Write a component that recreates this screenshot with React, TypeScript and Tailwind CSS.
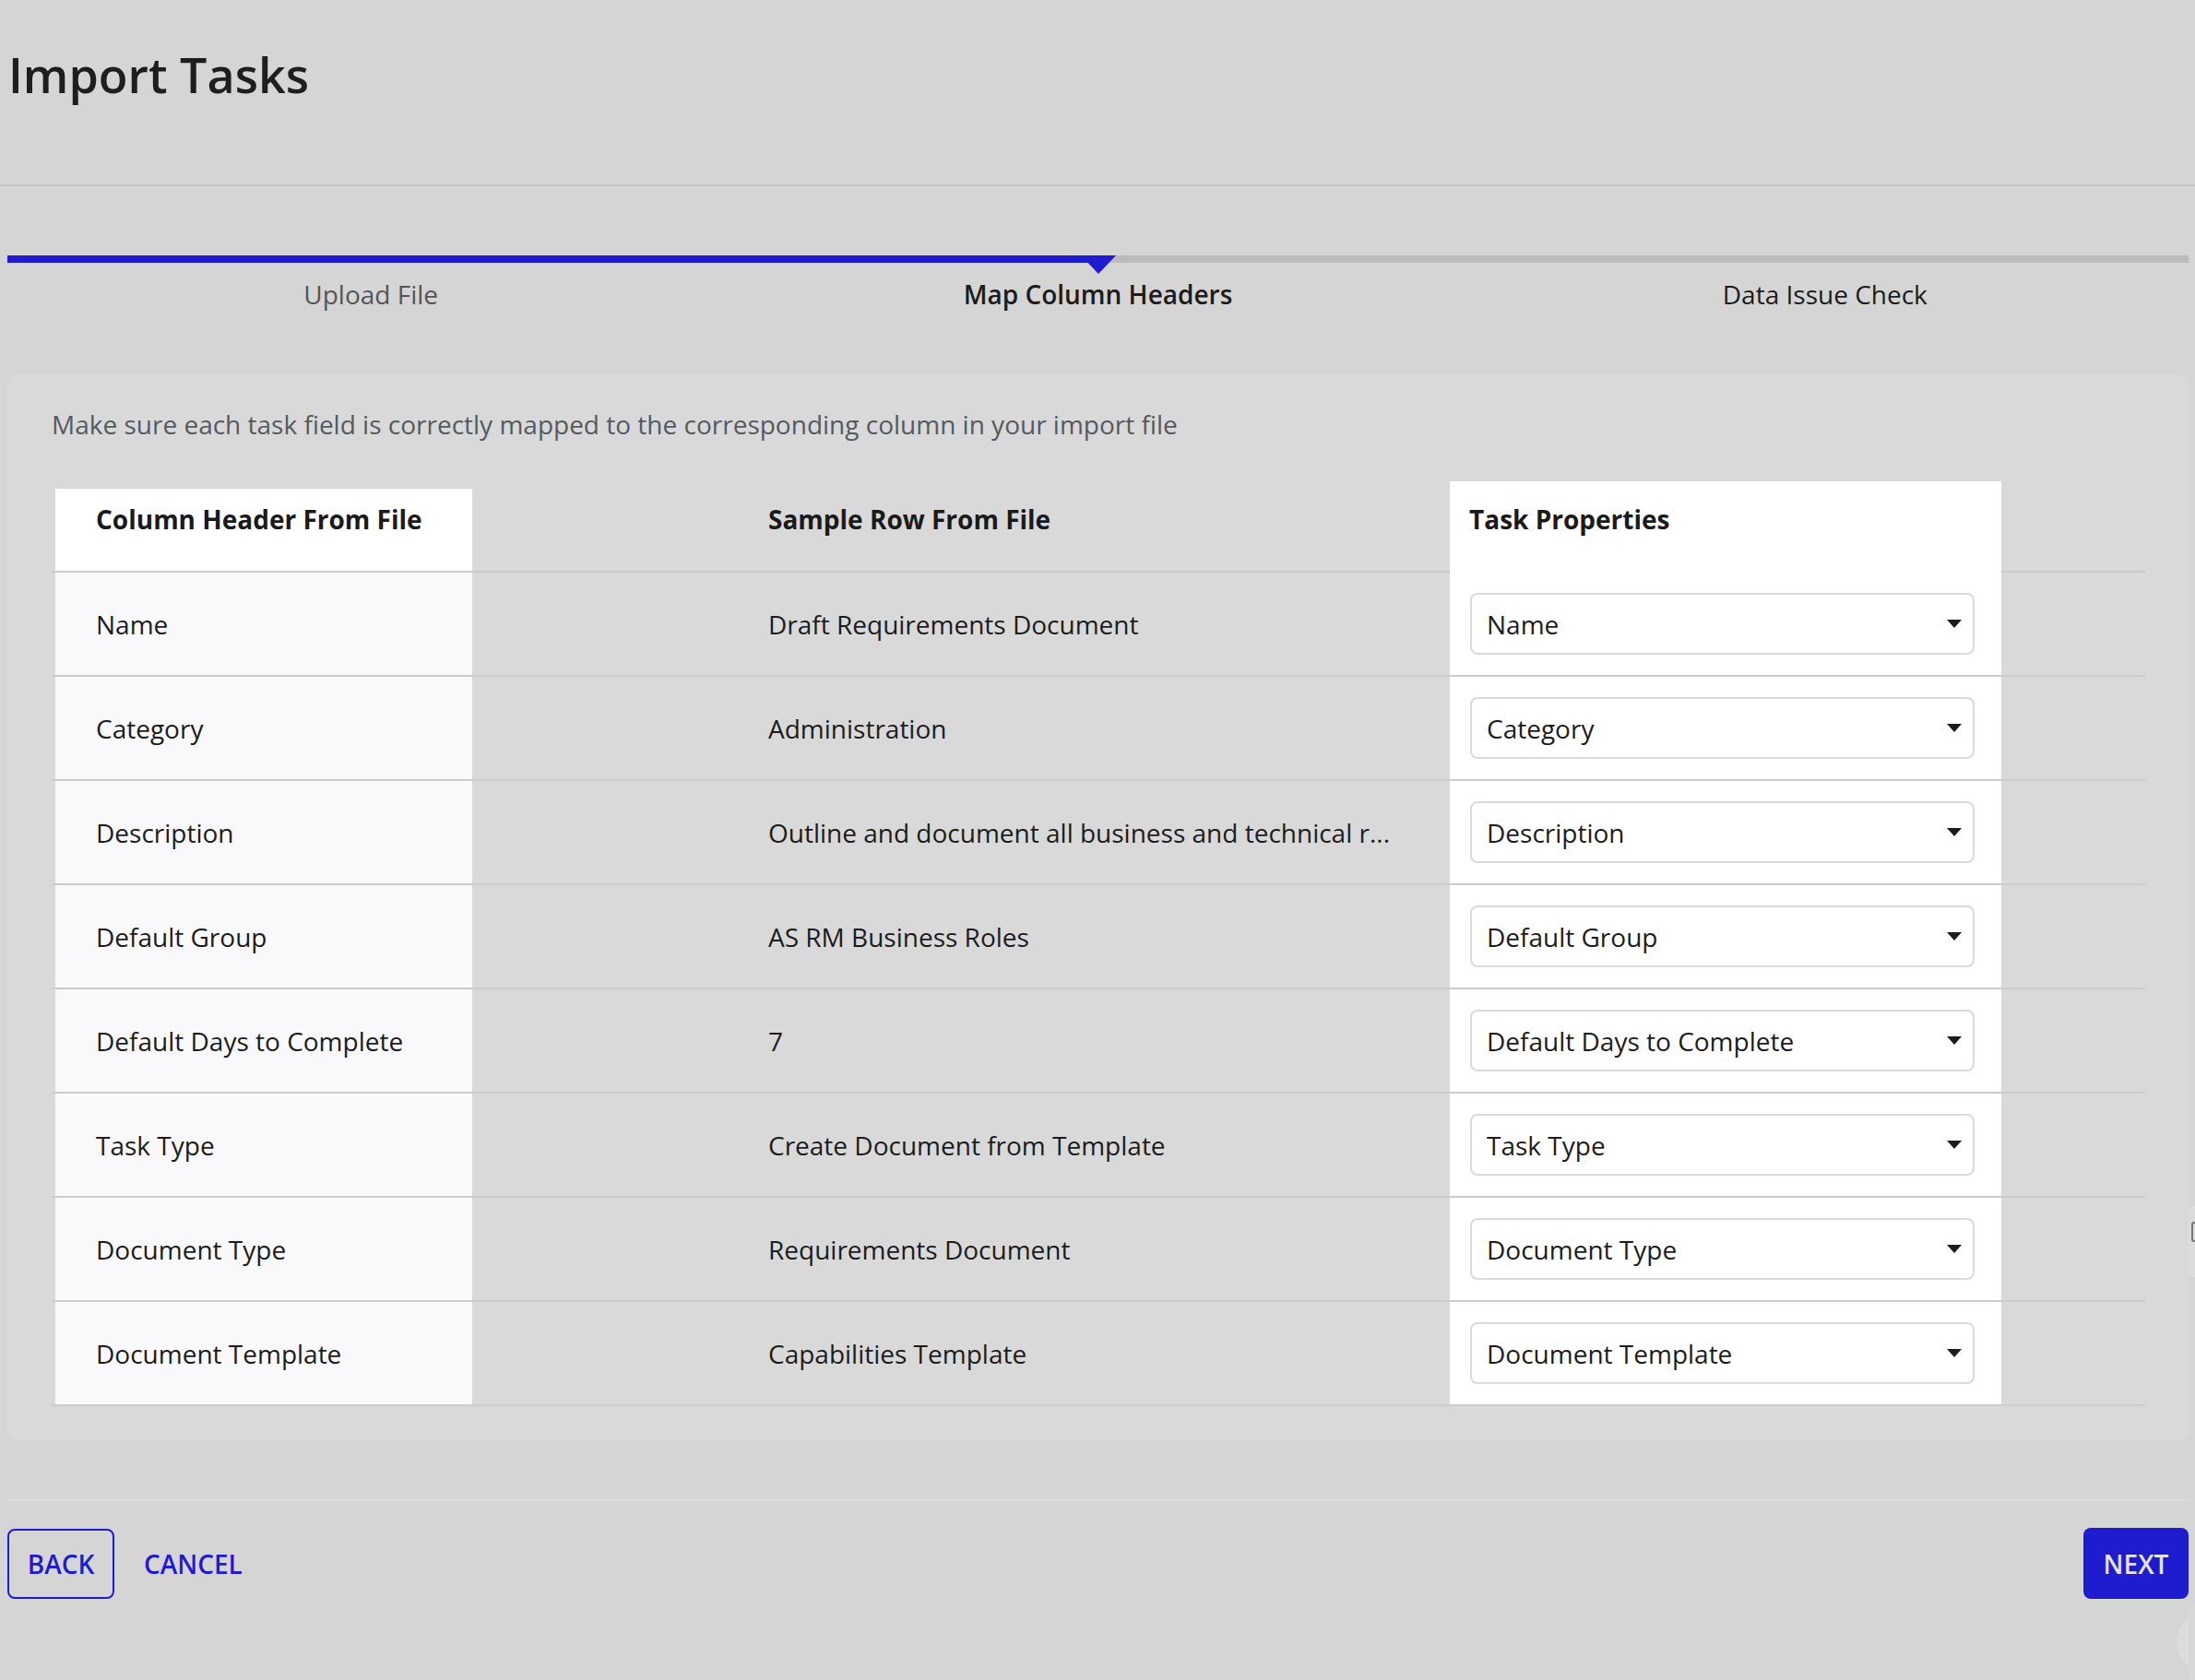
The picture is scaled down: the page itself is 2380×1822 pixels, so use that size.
import React from "react";

const rows = [
  { header: "Name", sample: "Draft Requirements Document", prop: "Name" },
  { header: "Category", sample: "Administration", prop: "Category" },
  { header: "Description", sample: "Outline and document all business and technical r...", prop: "Description" },
  { header: "Default Group", sample: "AS RM Business Roles", prop: "Default Group" },
  { header: "Default Days to Complete", sample: "7", prop: "Default Days to Complete" },
  { header: "Task Type", sample: "Create Document from Template", prop: "Task Type" },
  { header: "Document Type", sample: "Requirements Document", prop: "Document Type" },
  { header: "Document Template", sample: "Capabilities Template", prop: "Document Template" },
];

function Caret() {
  return (
    <svg width="16" height="9" viewBox="0 0 16 9" className="shrink-0">
      <path d="M0 0 H16 L8 9 Z" fill="#1c1c1c" />
    </svg>
  );
}

function SelectBox({ value }: { value: string }) {
  return (
    <div className="h-[67px] w-[547px] bg-white border-2 border-[#dadada] rounded-[8px] flex items-center justify-between pl-[16px] pr-[12px]">
      <span className="text-[28px] text-[#1c1c1c]">{value}</span>
      <Caret />
    </div>
  );
}

export default function App() {
  return (
    <div className="relative w-[2380px] h-[1822px] overflow-hidden bg-[#d5d5d5] font-['Open_Sans',sans-serif]">
      {/* Header */}
      <div className="h-[202px] border-b-2 border-[#c5c5ca] pl-[9px] pt-[45px]">
        <h1 className="text-[52px] leading-[71px] font-semibold text-[#1e1e1e]">Import Tasks</h1>
      </div>

      <div className="w-[2373px]">
        {/* Stepper */}
        <div className="ml-[8px] w-[2365px] pt-[75px]">
          <div className="relative h-[8px] flex">
            <div className="w-[1183px] h-full bg-[#1f1bcf]" />
            <div className="flex-1 h-full bg-[#bbbbbb]" />
            <svg width="38" height="20" viewBox="0 0 38 20" className="absolute left-[1164px] top-0">
              <path d="M0 0 H38 L19 20 Z" fill="#1f1bcf" />
            </svg>
          </div>
          <div className="grid grid-cols-3 text-center text-[28px] leading-[38px] pt-[15px]">
            <span className="text-[#555555]">Upload File</span>
            <span className="font-semibold text-[#1c1c1c]">Map Column Headers</span>
            <span className="text-[#1c1c1c]">Data Issue Check</span>
          </div>
        </div>

        {/* Panel */}
        <div className="ml-[8px] mt-[68px] w-[2365px] bg-[#d9d9d9] rounded-[12px] pt-[35px] pb-[37px] pl-[48px]">
          <p className="text-[28px] leading-[38px] text-[#555a60]">
            Make sure each task field is correctly mapped to the corresponding column in your import file
          </p>

          <div className="mt-[51px] w-[2270px]">
            {/* Header row */}
            <div className="flex h-[91px] border-b-2 border-black/[0.07] text-[28px] leading-[38px] font-bold text-[#1a1a1a]">
              <div className="ml-[4px] w-[452px] bg-white pl-[44px] pt-[14px]">Column Header From File</div>
              <div className="w-[1060px] pl-[321px] pt-[14px]">Sample Row From File</div>
              <div className="w-[598px] bg-white pl-[21px] -mt-[8px] h-[99px] pt-[22px]">Task Properties</div>
            </div>

            {rows.map((r) => (
              <div key={r.header} className="flex h-[113px] border-b-2 border-black/[0.06] text-[28px] text-[#1c1c1c]">
                <div className="ml-[4px] w-[452px] bg-[#f9f9fb] flex items-center pl-[44px]">{r.header}</div>
                <div className="w-[1060px] flex items-center pl-[321px]">{r.sample}</div>
                <div className="w-[598px] bg-white flex items-center pl-[22px]">
                  <SelectBox value={r.prop} />
                </div>
              </div>
            ))}
          </div>
        </div>

        {/* Footer */}
        <div className="ml-[8px] mt-[64px] w-[2365px] border-t-2 border-[#dcdcdc] pt-[29px] flex items-center justify-between">
          <div className="flex items-center gap-[32px]">
            <button className="h-[76px] w-[116px] border-2 border-[#1f1bcf] rounded-[8px] text-[28px] font-semibold text-[#1f1bcf]">
              BACK
            </button>
            <button className="text-[28px] font-semibold text-[#1f1bcf]">CANCEL</button>
          </div>
          <button className="h-[77px] w-[114px] bg-[#1f1bcf] rounded-[8px] text-[28px] font-semibold text-[#e4e4ee]">
            NEXT
          </button>
        </div>
      </div>

      {/* Right-edge overlays */}
      <div className="absolute right-0 top-[1308px] w-[7px] h-[77px] bg-[#dcdcdc] rounded-l-[6px]">
        <div className="ml-[3px] mt-[17px] w-[6px] h-[22px] border-2 border-[#777] rounded-[3px]" />
      </div>
      <div className="absolute left-[2360px] top-[1748px] w-[66px] h-[66px] rounded-full bg-[#dcdcdc]" />
      <div className="absolute right-0 top-[1740px] w-[7px] h-[82px] bg-[#d7d7d7]" />
    </div>
  );
}
